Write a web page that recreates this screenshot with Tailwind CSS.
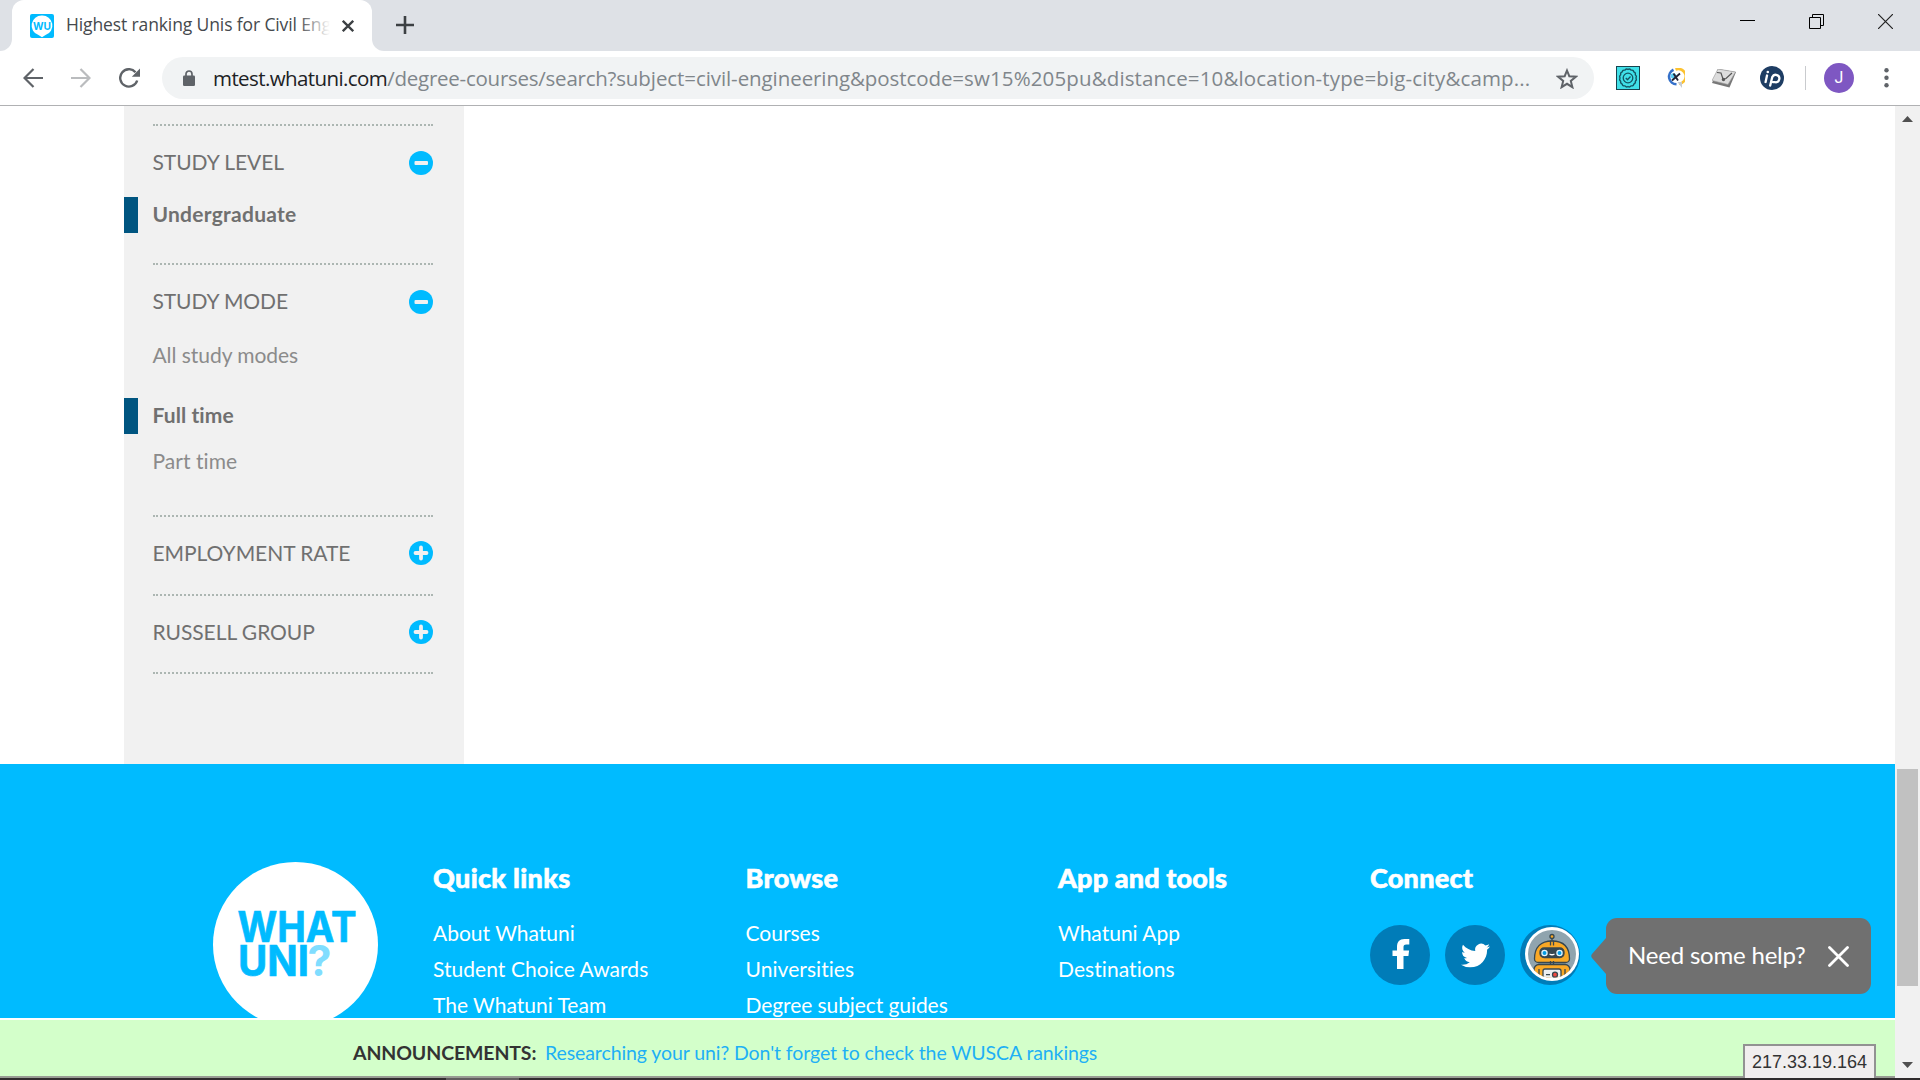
<!DOCTYPE html>
<html lang="en">
<head>
<meta charset="utf-8">
<title>Highest ranking Unis for Civil Engineering</title>
<script src="https://cdn.jsdelivr.net/npm/@tailwindcss/browser@4"></script>
</head>
<body class="w-[1920px] h-[1080px] overflow-hidden bg-white flex flex-col font-['Lato',sans-serif] [font-variant-ligatures:none]">

<!-- Tab strip -->
<header class="h-[51px] shrink-0 bg-[#dee1e6] flex font-['Open_Sans',sans-serif]">
  <div class="w-3 h-[51px] bg-white"><div class="h-full rounded-br-[12px] bg-[#dee1e6]"></div></div>
  <div class="w-[360px] h-[51px] bg-white rounded-t-[12px] flex items-center pl-[18px]">
    <svg class="w-6 h-6 shrink-0" viewBox="0 0 24 24"><rect width="24" height="24" rx="2" fill="#00bbff"/><path d="M12 1.500a10 10 0 0 1 3.500 19.500L12 23.200 8.500 21A10 10 0 0 1 12 1.500z" fill="#fff"/><text x="12" y="15.500" text-anchor="middle" font-family="Inter, sans-serif" font-weight="700" font-size="11" textLength="18" lengthAdjust="spacingAndGlyphs" fill="#00bbff">WU</text></svg>
    <div class="relative ml-3 mb-[3px] w-[264px] shrink-0 overflow-hidden whitespace-nowrap text-[17.500px] leading-6 tracking-[-0.120px] text-[#45494d]">Highest ranking Unis for Civil Eng<div class="absolute right-0 top-0 w-8 h-6 bg-gradient-to-r from-white/0 to-white"></div></div>
    <svg class="ml-3 w-3 h-3 shrink-0" viewBox="0 0 12 12" stroke="#3c4043" stroke-width="2.300"><path d="M.8.8l10.400 10.400M11.200.8L.8 11.200"/></svg>
  </div>
  <div class="w-3 h-[51px] bg-white"><div class="h-full rounded-bl-[12px] bg-[#dee1e6]"></div></div>
  <svg class="ml-3 mt-4 w-[18px] h-[18px]" viewBox="0 0 18 18" stroke="#3c4043" stroke-width="2.600"><path d="M9 0v18M0 9h18"/></svg>
  <div class="ml-auto flex items-start pr-[27px] gap-[54px] pt-[14px]">
    <svg class="w-[15px] h-[15px]" viewBox="0 0 15 15"><path d="M0 6.500h15" stroke="#000"/></svg>
    <svg class="w-[15px] h-[15px]" viewBox="0 0 15 15" fill="none" stroke="#000"><path d="M.5 3.500h11v11H.5zM3.500 3.500v-3h11v11h-3"/></svg>
    <svg class="w-[15px] h-[15px]" viewBox="0 0 15 15"><path d="M0 0l15 15M15 0L0 15" stroke="#222" stroke-width="1.200"/></svg>
  </div>
</header>

<!-- Toolbar -->
<nav class="h-[55px] shrink-0 border-b border-[#b0b1b3] bg-white flex items-center font-['Open_Sans',sans-serif]">
  <svg class="ml-[23px] w-5 h-5" viewBox="0 0 20 20" fill="none" stroke="#5f6368" stroke-width="2.200"><path d="M20 10H1.500M10.500 1L1.500 10l9 9"/></svg>
  <svg class="ml-7 w-5 h-5" viewBox="0 0 20 20" fill="none" stroke="#babcbe" stroke-width="2.200"><path d="M0 10h18.500M9.500 1l9 9-9 9"/></svg>
  <svg class="ml-7 w-[21px] h-5" viewBox="0 0 21 20"><path d="M18.200 12.500A8.700 8.700 0 1 1 16.500 4.200" fill="none" stroke="#5f6368" stroke-width="2.400"/><path d="M21 .5v8.200h-8.200z" fill="#5f6368"/></svg>
  <div class="ml-[22px] w-[1432px] h-[42px] rounded-full bg-[#f1f3f4] flex items-center">
    <svg class="ml-[21px] w-3 h-4" viewBox="0 0 12 16"><path d="M3 6V4a3 3 0 0 1 6 0v2" fill="none" stroke="#5f6368" stroke-width="1.700"/><rect y="5.500" width="12" height="10.500" rx="1.300" fill="#5f6368"/></svg>
    <div class="ml-[18px] w-[1323px] whitespace-nowrap text-[20.500px] leading-[30px] text-[#80868b]"><span class="text-[#202124] tracking-[-0.590px]">mtest.whatuni.com</span><span class="tracking-[-0.250px]">/degree-courses/search?</span><span class="tracking-[-0.080px]">subject=civil-engineering&amp;postcode=</span><span class="tracking-[0.130px]">sw15%205pu&amp;distance=10&amp;location-type=big-city&amp;camp...</span></div>
    <svg class="ml-5 w-[22px] h-[21px]" viewBox="0 0 22 21" fill="none" stroke="#5f6368" stroke-width="2"><path d="M11 2.500l2.300 5.700 6.500.5-5 4.200 1.600 6.300L11 15.800l-5.400 3.400 1.600-6.300-5-4.200 6.500-.5z"/></svg>
  </div>
  <svg class="ml-[22px] w-6 h-6" viewBox="0 0 24 24"><rect x=".5" y=".5" width="23" height="23" fill="#40e0e8" stroke="#17444f"/><g fill="none" stroke="#145562" stroke-width="1.300" stroke-linejoin="round"><path d="M12 3.500q1.600-1.200 3 .6 2.500-.4 2.700 1.800 2.200.7 1.600 2.900 1.800 1.400.6 3.200 1.200 1.800-.6 3.200.6 2.200-1.600 2.900-.2 2.200-2.700 1.800-1.400 1.800-3 .6-1.600 1.200-3-.6-2.500.4-2.700-1.800-2.200-.7-1.600-2.900-1.800-1.400-.6-3.200-1.200-1.800.6-3.200-.6-2.200 1.600-2.900.2-2.200 2.700-1.800 1.400-1.800 3-.6z"/><circle cx="12" cy="12" r="4.800"/><path d="M9.800 12l1.700 1.700 3-3.200"/></g></svg>
  <svg class="ml-[27px] w-[18px] h-[21px]" viewBox="0 0 18 21" fill="none"><path d="M8.500 1.500A7.400 7.400 0 1 1 12 15.700" stroke="#fcc230" stroke-width="2.600"/><path d="M6.500 1.800a7.600 7.600 0 0 0 3 14.500" stroke="#3470c9" stroke-width="2.600"/><circle cx="6.500" cy="8" r="2.800" fill="#5bcdf5"/><path d="M6.500 5.500l4.500 7M13 5.500L5 12.500" stroke="#223" stroke-width="1.800"/><path d="M10.500 14h4.500v6z" fill="#c8ccd0"/></svg>
  <svg class="ml-[27px] w-6 h-[19px]" viewBox="0 0 24 19"><path d="M6 0l18 3-6.500 15.500L0 14z" fill="#777"/><path d="M6 0l17.500 3-7.500 12.500L0 11.500z" fill="#dcdcdc" stroke="#999" stroke-width=".6"/><path d="M5 3.500l4 .5 2 6 3-.5 6-5.500" fill="none" stroke="#555" stroke-width="1.200"/><circle cx="11.500" cy="10.500" r="1.700" fill="#555"/></svg>
  <svg class="ml-6 w-6 h-6" viewBox="0 0 24 24"><circle cx="12" cy="12" r="12" fill="#1e3d63"/><g fill="none" stroke="#fff" stroke-width="2.300" stroke-linecap="round"><path d="M7 9.500L5.600 16M10.200 19.500L12.300 11a3.700 3.700 0 1 1 2.700 5.200h-2"/></g><circle cx="7.800" cy="6" r="1.300" fill="#fff"/></svg>
  <div class="ml-[21px] w-px h-6 bg-[#c9cbce]"></div>
  <div class="ml-[18px] size-[30px] rounded-full bg-[#7e57c2] text-white text-base text-center leading-[30px] font-['Roboto',sans-serif]">J</div>
  <svg class="ml-[30px] w-[5px] h-[20px]" viewBox="0 0 5 20" fill="#5f6368"><circle cx="2.500" cy="2.300" r="2.200"/><circle cx="2.500" cy="9.800" r="2.200"/><circle cx="2.500" cy="17.300" r="2.200"/></svg>
</nav>

<main class="h-[972px] shrink-0 flex">
  <div class="w-[1895px] flex flex-col">
    <!-- Filters -->
    <aside class="ml-[124px] w-[340px] h-[658px] shrink-0 bg-[#f1f1f1] pt-[18px] text-[21px] leading-[26px] text-[#707070]">
      <section class="h-[139px]">
        <div class="ml-[29px] w-[280px] border-t-2 border-dotted border-[#acb6b2] pt-[23px] flex justify-between items-center"><h3 class="-ml-[0.500px] tracking-[-0.050px]">STUDY LEVEL</h3><svg class="size-6 mt-px" viewBox="0 0 24 24"><circle cx="12" cy="12" r="12" fill="#00bbff"/><rect x="5.500" y="10" width="13.500" height="4" rx="1" fill="#f1f1f1"/></svg></div>
        <div class="mt-[22px] h-9 flex items-center border-l-[14px] border-[#005580] pl-[14.500px] pb-[2px] font-bold tracking-[0.260px]">Undergraduate</div>
      </section>
      <section class="h-[252px]">
        <div class="ml-[29px] w-[280px] border-t-2 border-dotted border-[#acb6b2] pt-[23px] flex justify-between items-center"><h3 class="-ml-[0.500px] tracking-[-0.100px]">STUDY MODE</h3><svg class="size-6 mt-[2px]" viewBox="0 0 24 24"><circle cx="12" cy="12" r="12" fill="#00bbff"/><rect x="5.500" y="10" width="13.500" height="4" rx="1" fill="#f1f1f1"/></svg></div>
        <div class="mt-7 pl-[28.500px] tracking-[-0.050px] text-[#8b8b8b]">All study modes</div>
        <div class="mt-[30px] h-9 flex items-center border-l-[14px] border-[#005580] pl-[14.500px] pb-[2px] font-bold tracking-[0.080px]">Full time</div>
        <div class="mt-[14px] pl-[28.500px] tracking-[0.050px] text-[#8b8b8b]">Part time</div>
      </section>
      <section class="h-[79px]">
        <div class="ml-[29px] w-[280px] border-t-2 border-dotted border-[#acb6b2] pt-[23px] flex justify-between items-center"><h3 class="-ml-[0.500px] tracking-[-0.050px]">EMPLOYMENT RATE</h3><svg class="size-6" viewBox="0 0 24 24"><circle cx="12" cy="12" r="12" fill="#00bbff"/><path d="M12 6.500v11M6.500 12h11" stroke="#f1f1f1" stroke-width="3.800" stroke-linecap="round"/></svg></div>
      </section>
      <section class="h-[78px]">
        <div class="ml-[29px] w-[280px] border-t-2 border-dotted border-[#acb6b2] pt-[23px] flex justify-between items-center"><h3 class="-ml-[0.500px] tracking-[-0.050px]">RUSSELL GROUP</h3><svg class="size-6" viewBox="0 0 24 24"><circle cx="12" cy="12" r="12" fill="#00bbff"/><path d="M12 6.500v11M6.500 12h11" stroke="#f1f1f1" stroke-width="3.800" stroke-linecap="round"/></svg></div>
      </section>
      <div class="ml-[29px] w-[280px] border-t-2 border-dotted border-[#acb6b2]"></div>
    </aside>

    <!-- Footer -->
    <footer class="relative h-[254px] shrink-0 overflow-hidden bg-[#00bbff] text-white flex pl-[213px]">
      <svg class="mt-[98px] w-[165px] h-[165px] shrink-0" viewBox="0 0 165 165"><circle cx="82.500" cy="82.500" r="82.500" fill="#fff"/><g font-family="Inter, sans-serif" font-weight="700" font-size="42" fill="#00bbff" stroke="#00bbff" stroke-width=".7"><text x="24.500" y="80" textLength="119" lengthAdjust="spacingAndGlyphs">WHAT</text><text x="25" y="113.500" textLength="71" lengthAdjust="spacingAndGlyphs">UNI</text><text x="94.500" y="113.500" textLength="24" lengthAdjust="spacingAndGlyphs" fill="#80ddff" stroke="none">?</text></g></svg>
      <div class="ml-[55px] pt-[98px] grid grid-cols-[312.500px_312.500px_312px_300px] text-[21px] leading-9 whitespace-nowrap">
        <div><h4 class="text-[27px] leading-8 font-black tracking-[0.300px] mb-[21px] [-webkit-text-stroke:0.600px_white]">Quick links</h4><p>About Whatuni</p><p class="tracking-[0.050px]">Student Choice Awards</p><p>The Whatuni Team</p></div>
        <div><h4 class="text-[27px] leading-8 font-black tracking-[0.300px] mb-[21px] [-webkit-text-stroke:0.600px_white]">Browse</h4><p>Courses</p><p class="tracking-[0.050px]">Universities</p><p class="tracking-[-0.080px]">Degree subject guides</p></div>
        <div><h4 class="text-[27px] leading-8 font-black tracking-[0.150px] mb-[21px] [-webkit-text-stroke:0.600px_white]">App and tools</h4><p>Whatuni App</p><p class="tracking-[0.070px]">Destinations</p></div>
        <div><h4 class="text-[27px] leading-8 font-black tracking-[0.250px] mb-[31px] [-webkit-text-stroke:0.600px_white]">Connect</h4>
          <div class="flex gap-[15px]">
            <svg class="size-[60px]" viewBox="0 0 60 60"><circle cx="30" cy="30" r="30" fill="#007cb8"/><path d="M27 44V31h-4.500v-5.500H27V22c0-5.300 2.500-8 7.500-8h4.800v5.500h-3c-2.200 0-2.800.9-2.800 2.800v3.200h5.600l-.7 5.500h-4.900v13z" fill="#fff"/></svg>
            <svg class="size-[60px]" viewBox="0 0 60 60"><circle cx="30" cy="30" r="30" fill="#007cb8"/><g transform="translate(16 16) scale(1.210)"><path fill="#fff" d="M23.950 4.570a10 10 0 0 1-2.820.77 4.960 4.960 0 0 0 2.160-2.720c-.95.550-2 .95-3.130 1.180a4.920 4.920 0 0 0-8.380 4.480C7.690 8.090 4.070 6.130 1.640 3.160a4.820 4.820 0 0 0-.67 2.480c0 1.710.870 3.210 2.190 4.100a4.900 4.900 0 0 1-2.230-.62v.06a4.920 4.920 0 0 0 3.950 4.830 5 5 0 0 1-2.210.08 4.940 4.940 0 0 0 4.600 3.420A9.870 9.870 0 0 1 0 19.540a13.990 13.990 0 0 0 7.550 2.210c9.050 0 14-7.500 14-13.980 0-.21 0-.42-.02-.63a9.940 9.940 0 0 0 2.460-2.550z"/></g></svg>
            <svg class="size-[60px]" viewBox="0 0 60 60"><defs><clipPath id="ava"><circle cx="32" cy="29" r="24"/></clipPath></defs><circle cx="30" cy="30" r="30" fill="#007cb8"/><circle cx="32" cy="29" r="27" fill="#fff"/><circle cx="32" cy="29" r="24" fill="#90a4ae"/><g clip-path="url(#ava)" stroke="#37474f" stroke-width="1.300"><path d="M32 13v4" /><circle cx="32" cy="11.500" r="2" fill="#f9a825"/><rect x="14" y="39.500" width="36" height="20" rx="5" fill="#f9a825"/><path d="M14.500 34C14.500 22 21 16 32 16s17.500 6 17.500 18c0 2-2 3.500-4 3.500h-27c-2 0-4-1.500-4-3.500z" fill="#f9a825"/><path d="M30.500 15.500v5M33.500 15.500v5M30.500 36v4M33.500 36v4"/><rect x="20" y="23" width="24" height="9.500" rx="4" fill="#37474f"/><circle cx="24.500" cy="28" r="2.600" fill="#039be5" stroke="#e1f5fe"/><circle cx="39.500" cy="28" r="2.600" fill="#039be5" stroke="#e1f5fe"/><path d="M29.500 29q2.500 1.500 5 0" fill="none" stroke="#fff"/><path d="M19 44v12M45 44v12"/><rect x="23" y="44" width="18" height="12" rx="2" fill="#eceff1"/><circle cx="35" cy="49.700" r="2.500" fill="#f0483e"/><path d="M26 49.700h4"/></g></svg>
          </div>
        </div>
      </div>
      <!-- Chat prompt -->
      <div class="absolute left-[1591px] top-[154px] flex items-center">
        <svg class="w-[15px] h-[36px]" viewBox="0 0 15 36"><path d="M15 0v36L1 20q-1.500-2 0-4z" fill="#707070"/></svg>
        <div class="w-[265px] h-[76px] rounded-[11px] bg-[#707070] flex items-center pl-[22px] text-2xl whitespace-nowrap"><span class="w-[177px] pb-[3px] tracking-[-0.200px]">Need some help?</span><svg class="ml-[23px] w-[21px] h-[21px]" viewBox="0 0 21 21" stroke="#fff" stroke-width="2.800" stroke-linecap="round"><path d="M1.500 1.500l18 18M19.500 1.500l-18 18"/></svg></div>
      </div>
    </footer>

    <!-- Announcement -->
    <div class="relative h-[60px] shrink-0 border-t-2 border-t-white border-b-2 border-b-[#989c93] bg-[#d3ffca] flex items-center pl-[353px] pt-[9px] text-[19.500px] whitespace-nowrap">
      <span class="w-[192px] text-[#333] font-bold tracking-[-0.120px]">ANNOUNCEMENTS:</span><span class="text-[#1eb0f5] tracking-[-0.090px]">Researching your uni? Don't forget to check the WUSCA rankings</span>
      <div class="absolute left-[1743px] top-6 w-[133px] h-[34px] border-2 border-b-0 border-[#929292] bg-[#f1eeee] text-center leading-8 text-lg text-[#333] font-['Liberation_Sans',sans-serif]">217.33.19.164</div>
    </div>
  </div>

  <!-- Scrollbar -->
  <div class="w-[25px] bg-[#f1f1f1] flex flex-col items-center">
    <svg class="mt-[10px] w-[11px] h-[6px]" viewBox="0 0 11 6"><path d="M5.500 0L11 6H0z" fill="#505050"/></svg>
    <div class="mt-[647px] w-[21px] h-[217px] bg-[#c1c1c1]"></div>
    <svg class="mt-[76px] w-[11px] h-[6px]" viewBox="0 0 11 6"><path d="M5.500 6L11 0H0z" fill="#505050"/></svg>
  </div>
</main>

<!-- Taskbar edge -->
<div class="h-[2px] shrink-0 bg-[#302c2d] pl-[446px]"><div class="w-[73px] h-full bg-[#625e5f]"></div></div>
</body>
</html>
